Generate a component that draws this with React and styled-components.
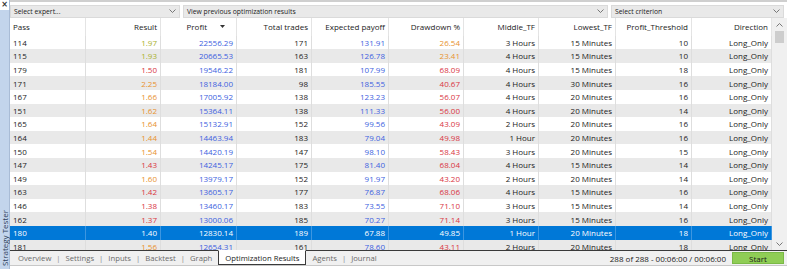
import styled, { createGlobalStyle } from 'styled-components';

const GlobalStyle = createGlobalStyle`
  html, body {
    margin: 0;
    padding: 0;
    background: #ffffff;
  }
  body {
    font-family: 'Open Sans', 'Noto Sans', sans-serif;
    font-size: 8px;
    color: #1b1b1b;
  }
`;

const COLS = [
  { key: 'pass', title: 'Pass', w: 76, align: 'left' },
  { key: 'result', title: 'Result', w: 75 },
  { key: 'profit', title: 'Profit', w: 76, sort: true },
  { key: 'trades', title: 'Total trades', w: 75 },
  { key: 'payoff', title: 'Expected payoff', w: 77 },
  { key: 'dd', title: 'Drawdown %', w: 75 },
  { key: 'mid', title: 'Middle_TF', w: 75 },
  { key: 'low', title: 'Lowest_TF', w: 77 },
  { key: 'thr', title: 'Profit_Threshold', w: 76 },
  { key: 'dir', title: 'Direction', w: 80 },
];

const GREEN = '#a9b22c';
const ORANGE = '#e8922e';
const RED = '#d9353f';
const BLUE = '#3d5fe0';

// pass, result, result colour, profit, trades, payoff, drawdown, dd colour, middle, lowest, threshold
const ROWS = [
  ['114', '1.97', GREEN, '22556.29', '171', '131.91', '26.54', ORANGE, '3 Hours', '15 Minutes', '10'],
  ['115', '1.93', GREEN, '20665.53', '163', '126.78', '23.41', ORANGE, '4 Hours', '15 Minutes', '10'],
  ['179', '1.50', RED, '19546.22', '181', '107.99', '68.09', RED, '4 Hours', '15 Minutes', '18'],
  ['171', '2.25', ORANGE, '18184.00', '98', '185.55', '40.67', RED, '4 Hours', '30 Minutes', '16'],
  ['167', '1.66', ORANGE, '17005.92', '138', '123.23', '56.07', RED, '4 Hours', '20 Minutes', '16'],
  ['151', '1.62', ORANGE, '15364.11', '138', '111.33', '56.00', RED, '4 Hours', '20 Minutes', '14'],
  ['165', '1.64', ORANGE, '15132.91', '152', '99.56', '43.09', RED, '2 Hours', '20 Minutes', '16'],
  ['164', '1.44', ORANGE, '14463.94', '183', '79.04', '49.98', RED, '1 Hour', '20 Minutes', '16'],
  ['150', '1.54', ORANGE, '14420.19', '147', '98.10', '58.43', RED, '3 Hours', '20 Minutes', '15'],
  ['147', '1.43', RED, '14245.17', '175', '81.40', '68.04', RED, '4 Hours', '15 Minutes', '14'],
  ['149', '1.60', ORANGE, '13979.17', '152', '91.97', '43.20', RED, '2 Hours', '20 Minutes', '14'],
  ['163', '1.42', RED, '13605.17', '177', '76.87', '68.06', RED, '4 Hours', '15 Minutes', '16'],
  ['146', '1.38', RED, '13460.17', '183', '73.55', '71.10', RED, '3 Hours', '15 Minutes', '14'],
  ['162', '1.37', RED, '13000.06', '185', '70.27', '71.14', RED, '3 Hours', '15 Minutes', '16'],
  ['180', '1.40', RED, '12830.14', '189', '67.88', '49.85', RED, '1 Hour', '20 Minutes', '18'],
  ['181', '1.56', ORANGE, '12654.31', '161', '78.60', '43.11', RED, '2 Hours', '20 Minutes', '18'],
];

const SELECTED = '180';

const TABS = ['Overview', 'Settings', 'Inputs', 'Backtest', 'Graph', 'Optimization Results', 'Agents', 'Journal'];
const ACTIVE_TAB = 'Optimization Results';

function Chevron({ up }) {
  return (
    <svg width="7" height="4" viewBox="0 0 7 4">
      <polyline
        points={up ? '0.5,3.5 3.5,0.5 6.5,3.5' : '0.5,0.5 3.5,3.5 6.5,0.5'}
        fill="none"
        stroke="#6a6a6a"
        strokeWidth="0.9"
      />
    </svg>
  );
}

export default function App() {
  return (
    <>
      <GlobalStyle />
      <Window>
        <SideStrip>
          <Close>×</Close>
          <SideTitle>Strategy Tester</SideTitle>
        </SideStrip>
        <Main>
          <TopBar>
            <Select $w={170}>
              <span>Select expert...</span>
              <Chevron />
            </Select>
            <Select $w={425}>
              <span>View previous optimization results</span>
              <Chevron />
            </Select>
            <Select $w={173}>
              <span>Select criterion</span>
              <Chevron />
            </Select>
          </TopBar>

          <GridArea>
            <Table>
              <HeaderRow>
                {COLS.map((c) => (
                  <HeadCell key={c.key} $w={c.w} $align={c.align}>
                    {c.title}
                    {c.sort && (
                      <SortMark width="5" height="3" viewBox="0 0 5 3">
                        <polygon points="0,0 5,0 2.5,3" fill="#333" />
                      </SortMark>
                    )}
                  </HeadCell>
                ))}
              </HeaderRow>
              {ROWS.map((r, i) => {
                const sel = r[0] === SELECTED;
                const values = [r[0], r[1], r[3], r[4], r[5], r[6], r[8], r[9], r[10], 'Long_Only'];
                const colours = [null, r[2], BLUE, null, BLUE, r[7], null, null, null, null];
                return (
                  <Row key={r[0]} $odd={i % 2 === 1} $selected={sel}>
                    {COLS.map((c, j) => (
                      <Cell
                        key={c.key}
                        $w={c.w}
                        $align={c.align}
                        $color={sel ? '#ffffff' : colours[j]}
                        $selected={sel}
                      >
                        {values[j]}
                      </Cell>
                    ))}
                  </Row>
                );
              })}
            </Table>
            <ScrollBar>
              <ScrollArrow>
                <Chevron up />
              </ScrollArrow>
              <Thumb />
              <ScrollTrack />
              <ScrollArrow>
                <Chevron />
              </ScrollArrow>
            </ScrollBar>
          </GridArea>

          <TabBar>
            <Tabs>
              {TABS.map((t, i) => (
                <TabGroup key={t}>
                  {i > 0 && TABS[i - 1] !== ACTIVE_TAB && t !== ACTIVE_TAB && <Divider>|</Divider>}
                  <Tab $active={t === ACTIVE_TAB}>{t}</Tab>
                </TabGroup>
              ))}
            </Tabs>
            <Status>
              <Progress>288 of 288 - 00:06:00 / 00:06:00</Progress>
              <StartButton>Start</StartButton>
            </Status>
          </TabBar>
          <BottomEdge />
        </Main>
      </Window>
    </>
  );
}

const Window = styled.div`
  display: flex;
  width: 787px;
  height: 269px;
  overflow: hidden;
  background: #f0f0f0;
`;

const SideStrip = styled.div`
  display: flex;
  flex-direction: column;
  justify-content: space-between;
  align-items: center;
  width: 9px;
  background: #c3d5ec;
  border-right: 1px solid #a9bcd6;
`;

const Close = styled.div`
  width: 100%;
  height: 10px;
  background: #ffffff;
  font-family: 'DejaVu Sans', sans-serif;
  font-size: 8px;
  line-height: 9px;
  font-weight: bold;
  text-align: center;
  color: #333;
`;

const SideTitle = styled.div`
  writing-mode: vertical-rl;
  transform: rotate(180deg);
  font-size: 8px;
  line-height: 9px;
  color: #2c3e5a;
  margin-bottom: 3px;
  white-space: nowrap;
`;

const Main = styled.div`
  display: flex;
  flex-direction: column;
  flex: 1;
  min-width: 0;
`;

const TopBar = styled.div`
  display: flex;
  align-items: center;
  gap: 3px;
  height: 18px;
  box-sizing: border-box;
  padding: 3px 3px 1px 0;
  background: #ffffff;
  border-top: 2px solid #cfcfcf;
`;

const Select = styled.div`
  display: flex;
  align-items: center;
  justify-content: space-between;
  width: ${(p) => p.$w}px;
  height: 13px;
  box-sizing: border-box;
  padding: 0 3px 0 3px;
  background: #e9e9e9;
  border: 1px solid #dadada;
  font-size: 6.8px;
  color: #1b1b1b;
`;

const GridArea = styled.div`
  display: flex;
  height: 233px;
  background: #ffffff;
  overflow: hidden;
`;

const Table = styled.div`
  display: flex;
  flex-direction: column;
  width: 762px;
`;

const HeaderRow = styled.div`
  display: flex;
  height: 17.6px;
  flex-shrink: 0;
  background: #ffffff;
`;

const HeadCell = styled.div`
  display: flex;
  align-items: center;
  justify-content: ${(p) => (p.$align === 'left' ? 'flex-start' : 'flex-end')};
  width: ${(p) => p.$w}px;
  box-sizing: border-box;
  padding: 0 3px;
  border-right: 1px solid #e4e4e4;
  color: #1b1b1b;
  white-space: nowrap;
`;

const SortMark = styled.svg`
  margin: 0 8px 0 13px;
`;

const Row = styled.div`
  display: flex;
  height: 13.6px;
  flex-shrink: 0;
  background: ${(p) => (p.$selected ? '#0078d7' : p.$odd ? '#e9e9e9' : '#ffffff')};
`;

const Cell = styled.div`
  display: flex;
  align-items: center;
  justify-content: ${(p) => (p.$align === 'left' ? 'flex-start' : 'flex-end')};
  width: ${(p) => p.$w}px;
  box-sizing: border-box;
  padding: 0 3px;
  border-right: 1px solid ${(p) => (p.$selected ? '#3d96e0' : '#dedede')};
  color: ${(p) => p.$color || '#1b1b1b'};
  white-space: nowrap;
`;

const ScrollBar = styled.div`
  display: flex;
  flex-direction: column;
  align-items: center;
  width: 15px;
  background: #f0f0f0;
`;

const ScrollArrow = styled.div`
  display: flex;
  align-items: center;
  justify-content: center;
  height: 13px;
  width: 100%;
`;

const Thumb = styled.div`
  width: 9px;
  height: 12px;
  background: #cdcdcd;
`;

const ScrollTrack = styled.div`
  flex: 1;
`;

const TabBar = styled.div`
  display: flex;
  align-items: stretch;
  justify-content: space-between;
  height: 15px;
  box-sizing: border-box;
  border-top: 1px solid #3a3a3a;
  background: #f0f0f0;
`;

const Tabs = styled.div`
  display: flex;
  align-items: stretch;
  padding-left: 8px;
  font-size: 7.7px;
`;

const TabGroup = styled.div`
  display: flex;
  align-items: stretch;
`;

const Divider = styled.span`
  display: flex;
  align-items: center;
  color: #8a8a8a;
  padding: 0 5px;
`;

const Tab = styled.div`
  display: flex;
  align-items: center;
  padding: 0 ${(p) => (p.$active ? '6px' : '0')};
  margin: ${(p) => (p.$active ? '-1px 6px 0 6px' : '0')};
  background: ${(p) => (p.$active ? '#ffffff' : 'transparent')};
  border: ${(p) => (p.$active ? '1px solid #3a3a3a' : 'none')};
  border-top: ${(p) => (p.$active ? '1px solid #ffffff' : 'none')};
  color: ${(p) => (p.$active ? '#1b1b1b' : '#6b6b6b')};
`;

const Status = styled.div`
  display: flex;
  align-items: center;
  gap: 6px;
  padding-right: 3px;
`;

const Progress = styled.span`
  color: #1b1b1b;
  white-space: pre;
`;

const StartButton = styled.div`
  display: flex;
  align-items: center;
  justify-content: center;
  width: 52px;
  height: 12px;
  box-sizing: border-box;
  background: #8fcd55;
  border: 1px solid #7ab946;
  color: #1b1b1b;
`;

const BottomEdge = styled.div`
  height: 3px;
  border-top: 1px solid #c8c8c8;
  background: #ffffff;
`;
